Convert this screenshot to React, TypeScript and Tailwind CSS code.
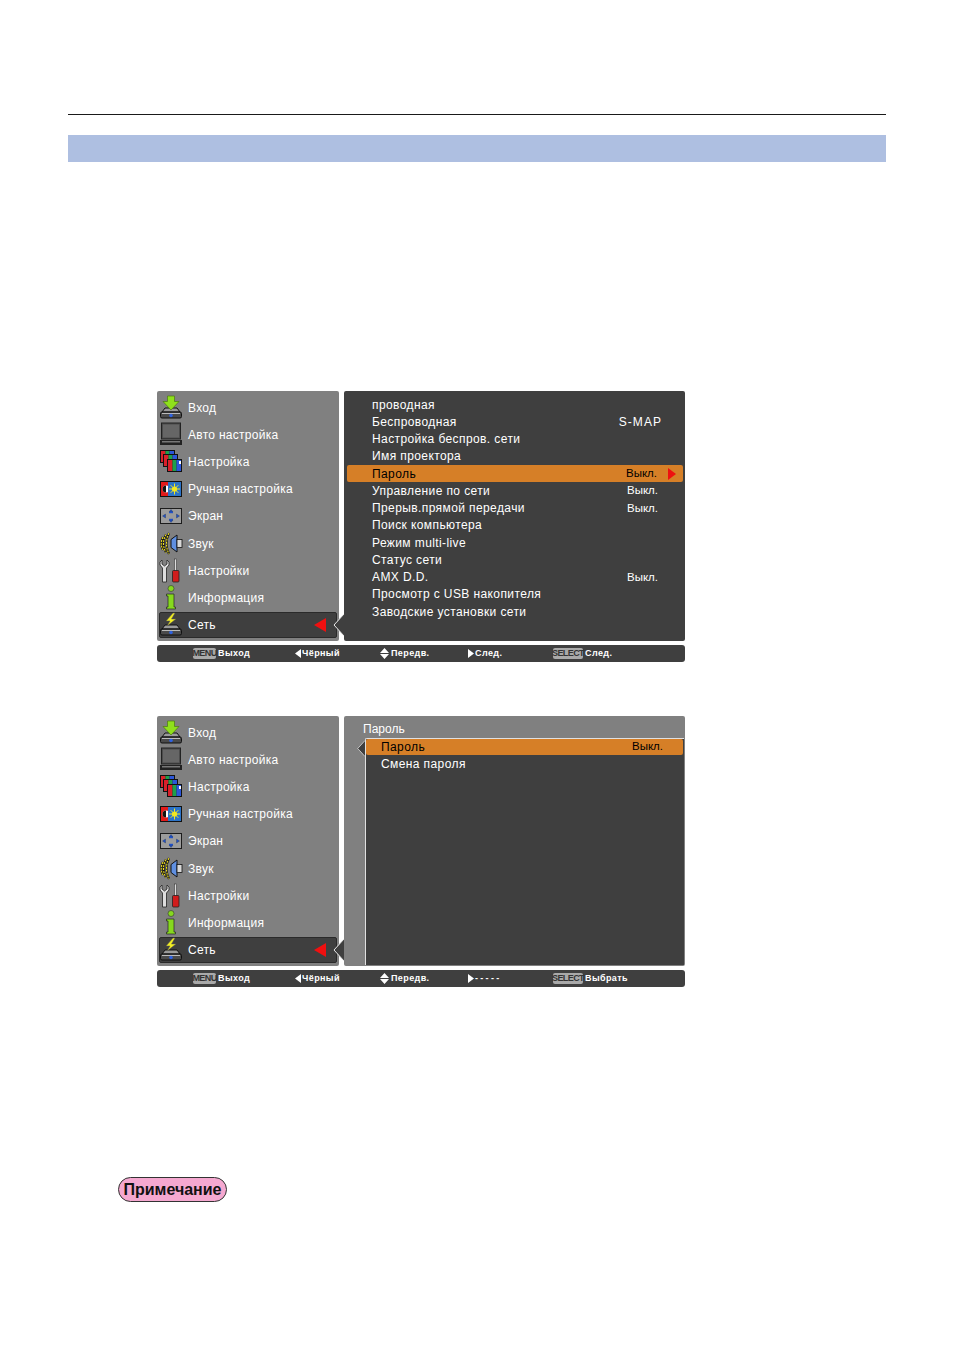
import React from "react";

const font = { fontFamily: '"Liberation Sans", sans-serif' };

function IconProjector({ bolt }: { bolt?: boolean }) {
  return (
    <svg width="24" height="25" viewBox="0 0 24 25">
      <path d="M3 17 L6 13 H18 L21 17 Z" fill="#9a9a9a" stroke="#111" />
      <rect x="1.5" y="17" width="21" height="6" rx="1.5" fill="#4a4a4a" stroke="#111" />
      <rect x="3" y="18" width="18" height="1" fill="#bbb" />
      <circle cx="12" cy="20.5" r="1.8" fill="#2f62e0" />
      {bolt ? (
        <path d="M14 1 L7 9 H11 L8 14 L17 7 H12.5 L16 1 Z" fill="#f2ee22" stroke="#555" strokeWidth="0.5" />
      ) : (
        <path d="M8.5 1 H15.5 V6.5 H20 L12 15 L4 6.5 H8.5 Z" fill="#8fe01c" stroke="#4c7a10" strokeWidth="0.7" />
      )}
    </svg>
  );
}

function IconLaptop() {
  return (
    <svg width="24" height="25" viewBox="0 0 24 25">
      <rect x="2.5" y="1" width="19" height="16" fill="#4c4c4c" stroke="#222" />
      <rect x="4" y="2.5" width="16" height="13" fill="#666" />
      <path d="M1 18 H23 V23 H1 Z" fill="#222" />
      <rect x="3" y="19" width="18" height="1.5" fill="#777" />
    </svg>
  );
}

function IconScreens() {
  const card = (x: number, y: number) => (
    <g key={x}>
      <rect x={x} y={y} width="15" height="13" fill="#111" />
      <rect x={x + 1} y={y + 1} width="4.5" height="11" fill="#d9202a" />
      <rect x={x + 5.5} y={y + 1} width="4" height="11" fill="#1ea04a" />
      <rect x={x + 9.5} y={y + 1} width="4.5" height="11" fill="#2c56d8" />
    </g>
  );
  return (
    <svg width="24" height="25" viewBox="0 0 24 25">
      {card(1, 1)}
      {card(4, 5)}
      {card(8, 10)}
      <rect x="20" y="12" width="2" height="3" fill="#fff" />
    </svg>
  );
}

function IconManual() {
  return (
    <svg width="24" height="25" viewBox="0 0 24 25">
      <rect x="1" y="4" width="22" height="16" fill="#111" />
      <rect x="2" y="5" width="7" height="14" fill="#e21a1a" />
      <circle cx="7" cy="12" r="3.5" fill="#fff" />
      <path d="M7 8.5 A3.5 3.5 0 0 0 7 15.5 Z" fill="#111" />
      <rect x="9" y="5" width="13" height="14" fill="#2b73c8" />
      <circle cx="15.5" cy="12" r="2.6" fill="#f2e820" />
      <path d="M15.5 6.5 V17.5 M10 12 H21 M11.7 8.2 L19.3 15.8 M19.3 8.2 L11.7 15.8" stroke="#f2e820" strokeWidth="1" />
    </svg>
  );
}

function IconScreen() {
  return (
    <svg width="24" height="25" viewBox="0 0 24 25">
      <rect x="1.5" y="4.5" width="21" height="15" fill="#9c9c9c" stroke="#1c1c1c" />
      <path d="M10 8 H14 L12 5.5 Z M10 16 H14 L12 18.5 Z" fill="#2050c8" stroke="#123" strokeWidth="0.3" />
      <path d="M6.5 10 V14 L3.5 12 Z M17.5 10 V14 L20.5 12 Z" fill="#2050c8" stroke="#123" strokeWidth="0.3" />
      <rect x="10" y="8" width="4" height="1.2" fill="#2050c8" />
      <rect x="10" y="14.8" width="4" height="1.2" fill="#2050c8" />
    </svg>
  );
}

function IconSound() {
  return (
    <svg width="24" height="25" viewBox="0 0 24 25" fill="none">
      <path d="M4 6 Q0.5 12.5 4 19" stroke="#111" strokeWidth="2.2" />
      <path d="M4 6 Q0.5 12.5 4 19" stroke="#f0e020" strokeWidth="1.1" strokeDasharray="2 1" />
      <path d="M7 3.5 Q2 12.5 7 21.5" stroke="#111" strokeWidth="2.2" />
      <path d="M7 3.5 Q2 12.5 7 21.5" stroke="#f0e020" strokeWidth="1.1" strokeDasharray="2 1" />
      <path d="M10 2 Q5 12.5 10 23" stroke="#111" strokeWidth="2.2" />
      <path d="M10 2 Q5 12.5 10 23" stroke="#f0e020" strokeWidth="1.1" strokeDasharray="2 1" />
      <path d="M12 8.5 L18 4 V21 L12 16.5 Z" fill="#5f8fe0" stroke="#111" />
      <rect x="18" y="8.5" width="5" height="8" fill="#d8d8d8" stroke="#111" strokeWidth="0.8" />
    </svg>
  );
}

function IconTools() {
  return (
    <svg width="24" height="25" viewBox="0 0 24 25">
      <path d="M3 2 V6 L5.5 8 L8 6 V2 L10 4 V7 L7.5 10 V24 H3.5 V10 L1 7 V4 Z" fill="#ddd" stroke="#222" strokeWidth="0.8" />
      <rect x="15.5" y="1" width="2" height="12" fill="#ddd" stroke="#222" strokeWidth="0.5" />
      <rect x="13.5" y="12.5" width="6.5" height="11.5" rx="1" fill="#d01c1c" stroke="#222" strokeWidth="0.8" />
    </svg>
  );
}

function IconInfo() {
  return (
    <svg width="24" height="25" viewBox="0 0 24 25">
      <circle cx="12" cy="3.5" r="3" fill="#86d81e" stroke="#333" strokeWidth="0.6" />
      <path d="M9 9 H15 V22 H16.5 V24 H7.5 V22 H9 V11 H7.5 V9 Z" fill="#86d81e" stroke="#222" strokeWidth="0.7" />
    </svg>
  );
}

function Notch({ className }: { className: string }) {
  return (
    <svg className={className} width="11" height="22" viewBox="0 0 11 22">
      <path d="M11 0 L1 11 L11 22 Z" fill="#3f3f3f" />
      <path d="M11 0 L1 11 L11 22" fill="none" stroke="#e8e8e8" strokeWidth="1" />
    </svg>
  );
}

const leftRows: [React.ReactNode, string][] = [
  [<IconProjector />, "Вход"],
  [<IconLaptop />, "Авто настройка"],
  [<IconScreens />, "Настройка"],
  [<IconManual />, "Ручная настройка"],
  [<IconScreen />, "Экран"],
  [<IconSound />, "Звук"],
  [<IconTools />, "Настройки"],
  [<IconInfo />, "Информация"],
];

function LeftPanel() {
  return (
    <div className="relative w-[182px] h-[250px] bg-[#808080] rounded-[2px] pl-[2px] pr-[2px] pt-[3px]">
      {leftRows.map(([icon, label]) => (
        <div key={label} className="flex items-center h-[27.2px] text-white text-[12px] tracking-[0.28px]">
          <span className="w-[24px] shrink-0">{icon}</span>
          <span className="ml-[5px]">{label}</span>
        </div>
      ))}
      <div className="flex items-center h-[26px] mt-[0.4px] bg-[#3f3f3f] rounded-[2px] border border-[#2a2a2a] text-white text-[12px] tracking-[0.28px]">
        <span className="w-[24px] shrink-0 -ml-[1px]"><IconProjector bolt /></span>
        <span className="ml-[5px]">Сеть</span>
        <svg className="ml-auto mr-[10px]" width="12" height="14" viewBox="0 0 12 14">
          <path d="M0 7 L12 0 V14 Z" fill="#f01010" />
        </svg>
      </div>
      <Notch className="absolute right-[-5px] top-[223px]" />
    </div>
  );
}

const Row = ({ label, value, active }: { label: string; value?: string; active?: boolean }) => (
  <div
    className={
      "flex items-center h-[17.25px] text-[12px] tracking-[0.4px] pl-[25px] " +
      (active ? "bg-[#d67f27] text-black rounded-[2px]" : "text-white")
    }
  >
    <span>{label}</span>
    {value && (
      <span className={value === "S-MAP" ? "ml-auto mr-[21px] tracking-[1.05px]" : "ml-auto mr-[25px] text-[11.5px] tracking-normal"}>
        {value}
      </span>
    )}
    {active && (
      <svg className="-ml-[14px] mr-[7px]" width="8" height="12" viewBox="0 0 8 12">
        <path d="M0 0 L8 6 L0 12 Z" fill="#ee1010" />
      </svg>
    )}
  </div>
);

function FooterKey({ text, w }: { text: string; w: string }) {
  return (
    <span className={"inline-flex items-center justify-center h-[11px] bg-[#a9a9a9] rounded-[2px] text-[#333] text-[9px] font-bold tracking-[-0.6px] mr-[2px] " + w}>
      {text}
    </span>
  );
}

function Footer({ items }: { items: [string, string, string] }) {
  return (
    <div className="flex items-center w-[528px] h-[17px] mt-[4px] bg-[#3f3f3f] rounded-[3px] text-white text-[9px] font-bold tracking-[0.4px]">
      <div className="flex items-center w-[138px] pl-[36px]">
        <FooterKey text="MENU" w="w-[23px]" />
        <span>Выход</span>
      </div>
      <div className="flex items-center w-[85px]">
        <svg className="mr-[1px]" width="6" height="9" viewBox="0 0 6 9"><path d="M6 0 V9 L0 4.5 Z" fill="#fff" /></svg>
        <span>Чёрный</span>
      </div>
      <div className="flex items-center w-[88px]">
        <svg className="mr-[2px]" width="9" height="11" viewBox="0 0 9 11"><path d="M4.5 0 L9 5 H0 Z M4.5 11 L9 6 H0 Z" fill="#fff" /></svg>
        <span>{items[0]}</span>
      </div>
      <div className="flex items-center w-[85px]">
        <svg className="mr-[1px]" width="6" height="9" viewBox="0 0 6 9"><path d="M0 0 V9 L6 4.5 Z" fill="#fff" /></svg>
        <span className={items[1] === "-----" ? "tracking-[2.3px]" : ""}>{items[1]}</span>
      </div>
      <div className="flex items-center">
        <FooterKey text="SELECT" w="w-[30px]" />
        <span>{items[2]}</span>
      </div>
    </div>
  );
}

export default function App() {
  return (
    <div className="w-[954px] h-[1350px] bg-white pt-[114px] overflow-hidden" style={font}>
      <div className="mx-[68px] h-px bg-[#1a1a1a]" />
      <div className="mx-[68px] mt-[20px] h-[27px] bg-[#aebfe1]" />

      <div className="ml-[157px] mt-[229px] w-[528px]">
        <div className="flex gap-[5px]">
          <LeftPanel />
          <div className="w-[341px] h-[250px] bg-[#3f3f3f] rounded-[2px] pl-[3px] pr-[2px] pt-[5px]">
            <Row label="проводная" />
            <Row label="Беспроводная" value="S-MAP" />
            <Row label="Настройка беспров. сети" />
            <Row label="Имя проектора" />
            <Row label="Пароль" value="Выкл." active />
            <Row label="Управление по сети" value="Выкл." />
            <Row label="Прерыв.прямой передачи" value="Выкл." />
            <Row label="Поиск компьютера" />
            <Row label="Режим multi-live" />
            <Row label="Статус сети" />
            <Row label="AMX D.D." value="Выкл." />
            <Row label="Просмотр с USB накопителя" />
            <Row label="Заводские установки сети" />
          </div>
        </div>
        <Footer items={["Передв.", "След.", "След."]} />
      </div>

      <div className="ml-[157px] mt-[54px] w-[528px]">
        <div className="flex gap-[5px]">
          <LeftPanel />
          <div className="relative w-[341px] h-[250px] bg-[#808080] rounded-[2px] flex flex-col">
            <div className="h-[22px] pt-[4px] pl-[19px] flex items-center text-white text-[12px]">Пароль</div>
            <div className="ml-[21px] flex-1 bg-[#3f3f3f] mr-[1px] mb-[1px] border-l border-t border-[#e0e0e0] rounded-tl-[2px] pr-[1px]">
              <div className="flex items-center h-[16px] bg-[#d67f27] text-black text-[12px] tracking-[0.4px] pl-[15px] rounded-[2px]">
                <span>Пароль</span>
                <span className="ml-auto mr-[20px] text-[11.5px] tracking-normal">Выкл.</span>
              </div>
              <div className="flex items-center h-[17px] text-white text-[12px] tracking-[0.4px] pl-[15px]">Смена пароля</div>
            </div>
            <Notch className="absolute left-[13px] top-[24px] w-[8px] h-[17px]" />
          </div>
        </div>
        <Footer items={["Передв.", "-----", "Выбрать"]} />
      </div>

      <div className="ml-[118px] mt-[190px] w-[109px] h-[25px] flex items-center justify-center rounded-full bg-[#f5a8d0] border border-[#333] text-[#111] text-[16px] font-bold">
        Примечание
      </div>
    </div>
  );
}
